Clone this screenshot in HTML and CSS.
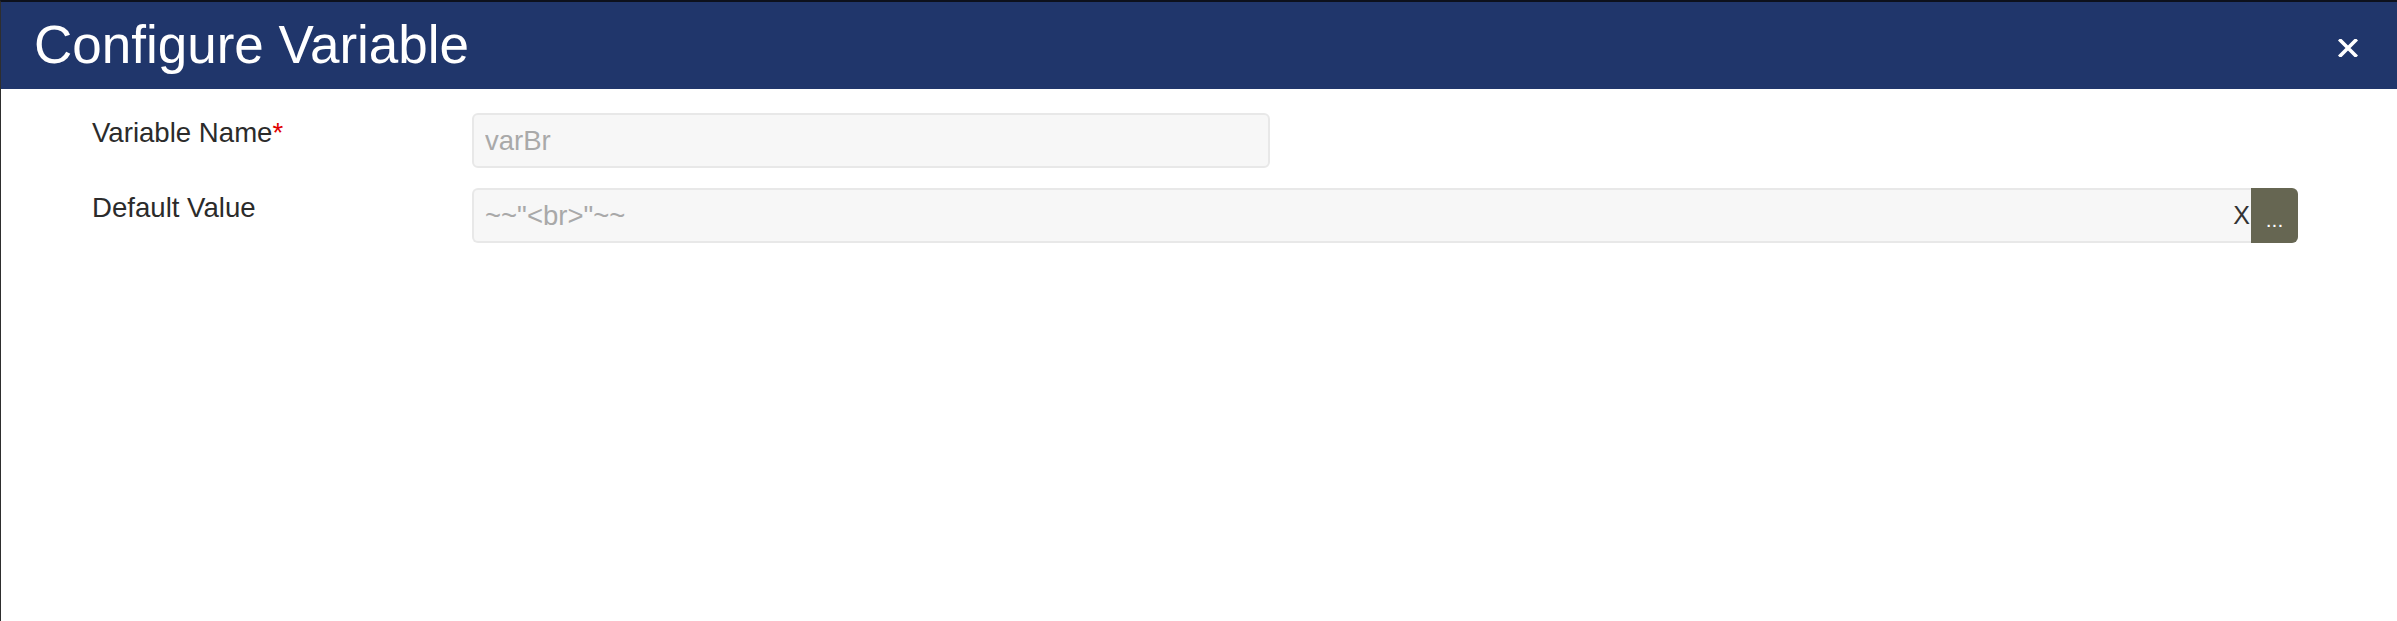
FILE: index.html
```html
<!DOCTYPE html>
<html lang="en">
<head>
<meta charset="utf-8">
<title>Configure Variable</title>
<link rel="stylesheet" href="styles.css">
</head>
<body>
<div class="modal">
  <div class="modal-header">
    <h1 class="modal-title">Configure Variable</h1>
    <button class="close-btn" aria-label="Close">
      <svg width="20" height="18" viewBox="0 0 20 18"><path d="M2.5 1.5 L17.5 16.5 M17.5 1.5 L2.5 16.5" stroke="#fff" stroke-width="3.6" stroke-linecap="square"/></svg>
    </button>
  </div>
  <div class="modal-body">
    <div class="form-row">
      <label class="form-label">Variable Name<span class="req">*</span></label>
      <div class="field">
        <input class="text-input name-input" type="text" value="varBr" disabled>
      </div>
    </div>
    <div class="form-row">
      <label class="form-label">Default Value</label>
      <div class="field">
        <div class="input-group">
          <div class="input-wrap">
            <input class="text-input group-input" type="text" value='~~"&lt;br&gt;"~~' disabled>
            <span class="clear-x">X</span>
          </div>
          <button class="more-btn">...</button>
        </div>
      </div>
    </div>
  </div>
</div>
</body>
</html>
```

FILE: styles.css
```css
html, body {
  margin: 0;
  padding: 0;
  background: #ffffff;
}

body {
  font-family: "Liberation Sans", Arial, sans-serif;
}

.modal {
  height: 621px;
  box-sizing: border-box;
  border-top: 2px solid #0d111c;
  border-left: 1px solid #2e2e2e;
  background: #ffffff;
  overflow: hidden;
}

.modal-header {
  height: 87px;
  background: #20366b;
  display: flex;
  align-items: center;
  justify-content: space-between;
  padding: 0 39px 2px 33px;
  box-sizing: border-box;
}

.modal-title {
  margin: 0;
  font-size: 53px;
  line-height: 1;
  font-weight: normal;
  color: #ffffff;
}

.close-btn {
  background: none;
  border: 0;
  padding: 0;
  margin-top: 6px;
  width: 20px;
  height: 18px;
  display: flex;
  cursor: pointer;
}

.modal-body {
  padding: 24px 99px 0 91px;
  display: flex;
  flex-direction: column;
  gap: 20px;
}

.form-row {
  display: grid;
  grid-template-columns: 380px 1fr;
  align-items: start;
}

.form-label {
  font-size: 27.6px;
  line-height: 31px;
  padding-top: 4px;
  color: #2b2b2b;
}

.req {
  color: #e00000;
}

.field {
  display: flex;
}

.text-input {
  height: 55px;
  box-sizing: border-box;
  border: 2px solid #e8e8e8;
  border-radius: 6px;
  background: #f7f7f7;
  font-family: "Liberation Sans", Arial, sans-serif;
  font-size: 27.5px;
  color: #a9a9a9;
  padding: 0 11px;
  margin: 0;
  -webkit-text-fill-color: #a9a9a9;
  opacity: 1;
}

.name-input {
  width: 798px;
}

.input-group {
  display: flex;
  flex: 1;
  height: 55px;
}

.input-wrap {
  position: relative;
  flex: 1;
  display: flex;
}

.group-input {
  flex: 1;
  width: 100%;
  border-right: 0;
  border-radius: 6px 0 0 6px;
}

.clear-x {
  position: absolute;
  right: 1px;
  top: 12px;
  font-size: 25px;
  line-height: 31px;
  color: #333333;
}

.more-btn {
  width: 47px;
  height: 55px;
  border: 0;
  margin: 0;
  padding: 8px 0 0 0;
  background: #666652;
  color: #ffffff;
  font-family: "Liberation Sans", Arial, sans-serif;
  font-size: 21px;
  border-radius: 0 6px 6px 0;
  cursor: pointer;
}
```
